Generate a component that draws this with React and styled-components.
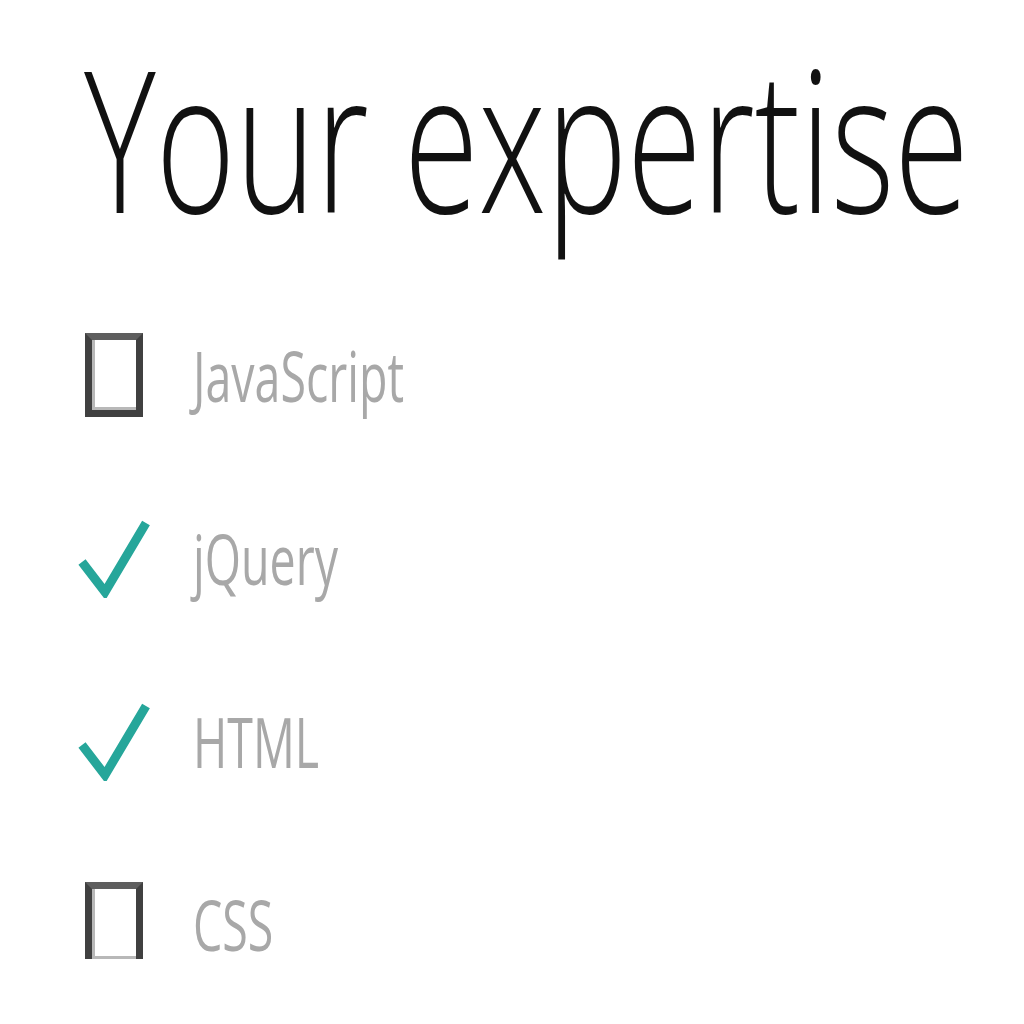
import React from 'react';
import styled, { createGlobalStyle } from 'styled-components';

const GlobalStyle = createGlobalStyle`
  html, body {
    margin: 0;
    padding: 0;
    background: #ffffff;
  }
  body {
    font-family: "Open Sans", "Liberation Sans", sans-serif;
  }
`;

const Page = styled.div`
  display: flex;
  flex-direction: column;
  padding: 38px 0 0 84px;
`;

const Title = styled.h1`
  margin: 0;
  font-size: 197px;
  line-height: 1;
  font-weight: 300;
  color: #111;
`;

// the screenshot uses a narrow face, so the text is squeezed horizontally
const Narrow = styled.span`
  display: block;
  width: max-content;
  white-space: nowrap;
  transform: scaleX(${(p) => p.$scale});
  transform-origin: left center;
`;

const List = styled.ul`
  list-style: none;
  margin: 105px 0 0 -6px;
  padding: 0;
  display: flex;
  flex-direction: column;
  gap: 113px;
`;

const Row = styled.li`
  display: flex;
  align-items: center;
  height: 70px;
  gap: 43px;
`;

const IconSlot = styled.div`
  width: 72px;
  height: 84px;
  display: flex;
  align-items: center;
  justify-content: center;
  flex-shrink: 0;
`;

const Box = styled.div`
  box-sizing: border-box;
  width: 58px;
  height: 84px;
  border: 7px solid #404040;
  border-top-color: #5e5e5e;
  box-shadow: inset 3px -3px 0 #b8b8b8;
  background: #fff;
`;

const Label = styled.div`
  font-size: 70px;
  line-height: 70px;
  font-weight: 400;
  color: #a8a8a8;
`;

const Check = () => (
  <svg width="72" height="80" viewBox="0 0 72 80">
    <path
      d="M4 44 L27 74 L68 5"
      fill="none"
      stroke="#26a69a"
      strokeWidth="9"
      strokeLinecap="butt"
      strokeLinejoin="miter"
    />
  </svg>
);

const skills = [
  { name: 'JavaScript', checked: false },
  { name: 'jQuery', checked: true },
  { name: 'HTML', checked: true },
  { name: 'CSS', checked: false },
];

function App() {
  return (
    <>
      <GlobalStyle />
      <Page>
        <Title>
          <Narrow $scale={0.69}>Your expertise</Narrow>
        </Title>
        <List>
          {skills.map((s) => (
            <Row key={s.name}>
              <IconSlot>{s.checked ? <Check /> : <Box />}</IconSlot>
              <Label>
                <Narrow $scale={0.665}>{s.name}</Narrow>
              </Label>
            </Row>
          ))}
        </List>
      </Page>
    </>
  );
}

export default App;
